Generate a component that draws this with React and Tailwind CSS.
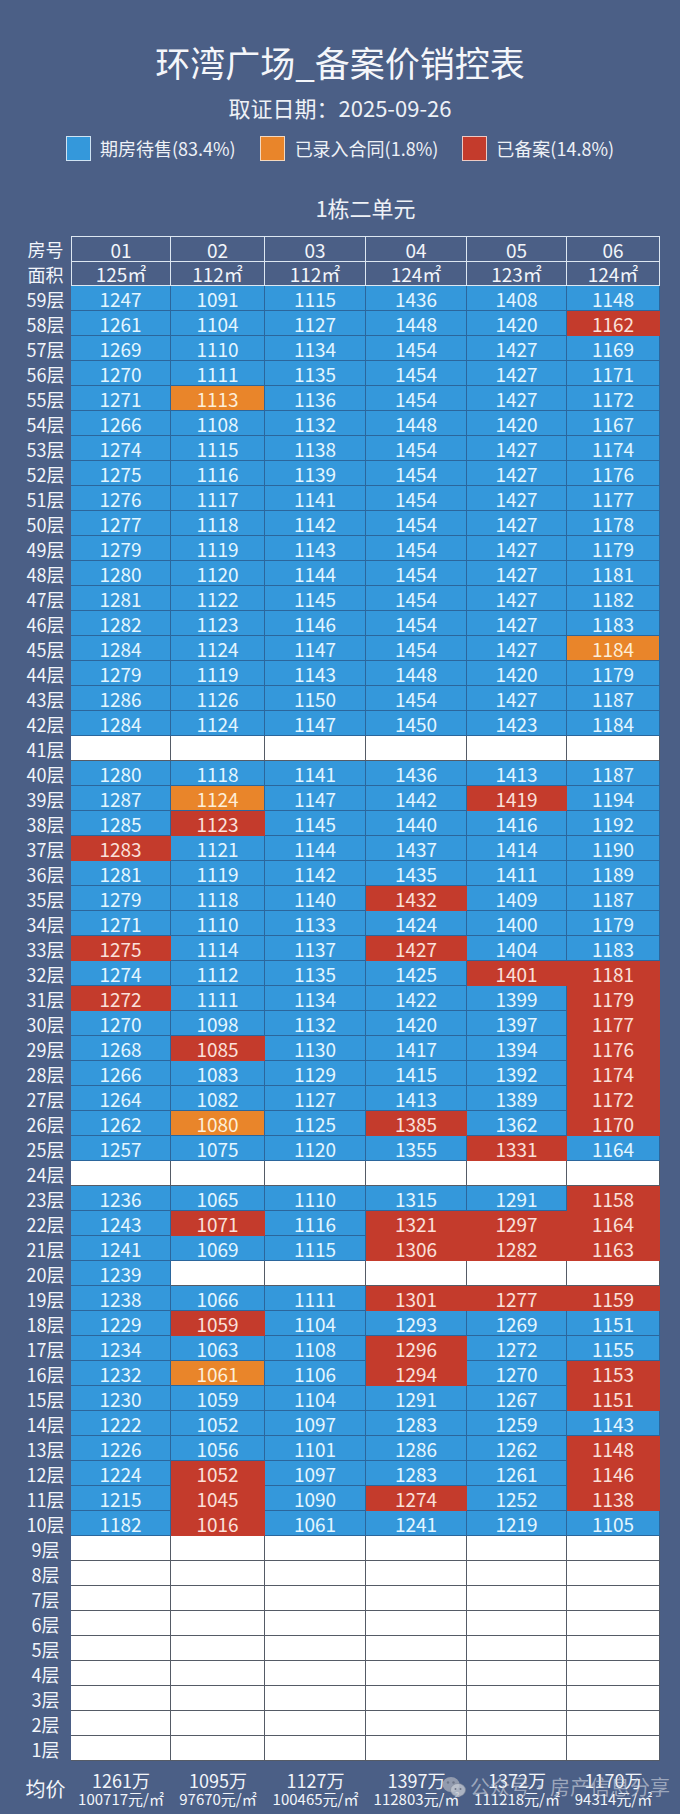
import React from 'react';

const font = { fontFamily: "'Noto Sans CJK SC', 'Noto Sans', sans-serif" };

const heads = ['01', '02', '03', '04', '05', '06'];
const areas = ['125㎡', '112㎡', '112㎡', '124㎡', '123㎡', '124㎡'];

// r = 已备案, o = 已录入合同, - = 空
const rows = [
	[59, '1247 1091 1115 1436 1408 1148'],
	[58, '1261 1104 1127 1448 1420 1162r'],
	[57, '1269 1110 1134 1454 1427 1169'],
	[56, '1270 1111 1135 1454 1427 1171'],
	[55, '1271 1113o 1136 1454 1427 1172'],
	[54, '1266 1108 1132 1448 1420 1167'],
	[53, '1274 1115 1138 1454 1427 1174'],
	[52, '1275 1116 1139 1454 1427 1176'],
	[51, '1276 1117 1141 1454 1427 1177'],
	[50, '1277 1118 1142 1454 1427 1178'],
	[49, '1279 1119 1143 1454 1427 1179'],
	[48, '1280 1120 1144 1454 1427 1181'],
	[47, '1281 1122 1145 1454 1427 1182'],
	[46, '1282 1123 1146 1454 1427 1183'],
	[45, '1284 1124 1147 1454 1427 1184o'],
	[44, '1279 1119 1143 1448 1420 1179'],
	[43, '1286 1126 1150 1454 1427 1187'],
	[42, '1284 1124 1147 1450 1423 1184'],
	[41, '- - - - - -'],
	[40, '1280 1118 1141 1436 1413 1187'],
	[39, '1287 1124o 1147 1442 1419r 1194'],
	[38, '1285 1123r 1145 1440 1416 1192'],
	[37, '1283r 1121 1144 1437 1414 1190'],
	[36, '1281 1119 1142 1435 1411 1189'],
	[35, '1279 1118 1140 1432r 1409 1187'],
	[34, '1271 1110 1133 1424 1400 1179'],
	[33, '1275r 1114 1137 1427r 1404 1183'],
	[32, '1274 1112 1135 1425 1401r 1181r'],
	[31, '1272r 1111 1134 1422 1399 1179r'],
	[30, '1270 1098 1132 1420 1397 1177r'],
	[29, '1268 1085r 1130 1417 1394 1176r'],
	[28, '1266 1083 1129 1415 1392 1174r'],
	[27, '1264 1082 1127 1413 1389 1172r'],
	[26, '1262 1080o 1125 1385r 1362 1170r'],
	[25, '1257 1075 1120 1355 1331r 1164'],
	[24, '- - - - - -'],
	[23, '1236 1065 1110 1315 1291 1158r'],
	[22, '1243 1071r 1116 1321r 1297r 1164r'],
	[21, '1241 1069 1115 1306r 1282r 1163r'],
	[20, '1239 - - - - -'],
	[19, '1238 1066 1111 1301r 1277r 1159r'],
	[18, '1229 1059r 1104 1293 1269 1151'],
	[17, '1234 1063 1108 1296r 1272 1155'],
	[16, '1232 1061o 1106 1294r 1270 1153r'],
	[15, '1230 1059 1104 1291 1267 1151r'],
	[14, '1222 1052 1097 1283 1259 1143'],
	[13, '1226 1056 1101 1286 1262 1148r'],
	[12, '1224 1052r 1097 1283 1261 1146r'],
	[11, '1215 1045r 1090 1274r 1252 1138r'],
	[10, '1182 1016r 1061 1241 1219 1105'],
	[9, '- - - - - -'],
	[8, '- - - - - -'],
	[7, '- - - - - -'],
	[6, '- - - - - -'],
	[5, '- - - - - -'],
	[4, '- - - - - -'],
	[3, '- - - - - -'],
	[2, '- - - - - -'],
	[1, '- - - - - -'],
];

const avgs = [
	['1261万', '100717元/㎡'],
	['1095万', '97670元/㎡'],
	['1127万', '100465元/㎡'],
	['1397万', '112803元/㎡'],
	['1372万', '111218元/㎡'],
	['1170万', '94314元/㎡'],
];

const cellStyles = {
	b: 'bg-[#3498db] text-[#e4f6ff] border-[#2b669c]',
	r: 'bg-[#c43b2c] text-[#fbe0da] border-[#c43b2c]',
	o: 'bg-[#e9852a] text-[#fdeed8] border-[#2b669c]',
	w: 'bg-white border-[#555b66]',
};

const grid = 'grid grid-cols-[71px_100px_94px_101px_101px_100px_93px]';

const parse = tok => {
	if (tok === '-') return { v: '', s: 'w' };
	const last = tok[tok.length - 1];
	if (last === 'r' || last === 'o') return { v: tok.slice(0, -1), s: last };
	return { v: tok, s: 'b' };
};

const Label = ({ children }) => (
	<div className="flex h-[25px] items-center justify-center pl-[20px] text-[18px] leading-none text-[#f2f5fa]">{children}</div>
);

const WeChat = () => (
	<svg width="24" height="22" viewBox="0 0 24 22">
		<ellipse cx="9" cy="8.5" rx="8.5" ry="7.5" fill="#a9afbb" fillOpacity="0.75" />
		<ellipse cx="16" cy="14" rx="7.5" ry="6.5" fill="#c3c8d1" fillOpacity="0.8" stroke="#7d8597" strokeOpacity="0.6" />
		<circle cx="6" cy="6.5" r="1.2" fill="#6e7688" />
		<circle cx="11.5" cy="6.5" r="1.2" fill="#6e7688" />
		<circle cx="13.5" cy="13" r="1" fill="#6e7688" />
		<circle cx="18.5" cy="13" r="1" fill="#6e7688" />
	</svg>
);

export default function App() {
	return (
		<div className="relative h-[1814px] w-[680px] overflow-hidden bg-[#4b5f86] text-white" style={font}>
			<div className="pt-[42px] text-center text-[35px] leading-[40px] text-[#f4f6fa]">环湾广场_备案价销控表</div>
			<div className="mt-[11px] text-center text-[22px] leading-[28px] text-[#eef1f6]">取证日期：2025-09-26</div>

			<div className="mt-[15px] flex items-center justify-center gap-[24px] text-[18px] leading-[25px] text-[#eef1f6]">
				<div className="flex items-center gap-[9px]">
					<span className="h-[25px] w-[25px] border border-[#cfe3f3] bg-[#3498db]" />
					<span>期房待售(83.4%)</span>
				</div>
				<div className="flex items-center gap-[10px]">
					<span className="h-[25px] w-[25px] border border-[#f3d8bf] bg-[#e9852a]" />
					<span>已录入合同(1.8%)</span>
				</div>
				<div className="flex items-center gap-[9px]">
					<span className="h-[25px] w-[25px] border border-[#eccac4] bg-[#c43b2c]" />
					<span>已备案(14.8%)</span>
				</div>
			</div>

			<div className="ml-[71px] mt-[32px] w-[589px] text-center text-[22px] leading-[28px] text-[#eef1f6]">1栋二单元</div>

			<div className="mt-[15px]">
				<div className={grid}>
					<Label>房号</Label>
					{heads.map((h, i) => (
						<div
							key={h}
							className={`flex h-[25px] items-center justify-center border-t border-r border-[#dde7f1] text-[19px] leading-none text-[#f2f5fa] ${i === 0 ? 'border-l' : ''}`}
						>
							{h}
						</div>
					))}
				</div>
				<div className={grid}>
					<Label>面积</Label>
					{areas.map((a, i) => (
						<div
							key={i}
							className={`flex h-[25px] items-center justify-center border-t border-r border-b border-[#dde7f1] text-[19px] leading-none text-[#f2f5fa] ${i === 0 ? 'border-l' : ''}`}
						>
							{a}
						</div>
					))}
				</div>

				{rows.map(([floor, line]) => (
					<div className={grid} key={floor}>
						<Label>{floor}层</Label>
						{line.split(' ').map(parse).map((c, i) => (
							<div
								key={i}
								className={`flex h-[25px] items-center justify-center border-r border-b text-[19px] leading-none ${cellStyles[c.s]}`}
							>
								{c.v}
							</div>
						))}
					</div>
				))}

				<div className={`${grid} h-[52px]`}>
					<div className="pl-[20px] pt-[16px] text-center text-[20px] leading-[24px] text-[#f2f5fa]">均价</div>
					{avgs.map(([total, unit]) => (
						<div key={total} className="flex flex-col items-center pt-[9px] text-[#f2f5fa]">
							<span className="text-[18px] leading-[20px]">{total}</span>
							<span className="whitespace-nowrap text-[15px] leading-[18px]">{unit}</span>
						</div>
					))}
				</div>
			</div>

			<div className="absolute left-[442px] top-[1776px] flex items-center gap-[4px] whitespace-nowrap text-[20px] leading-none text-[#d4d8e0]/60">
				<WeChat />
				<span>公众号·房产信息分享</span>
			</div>
		</div>
	);
}
